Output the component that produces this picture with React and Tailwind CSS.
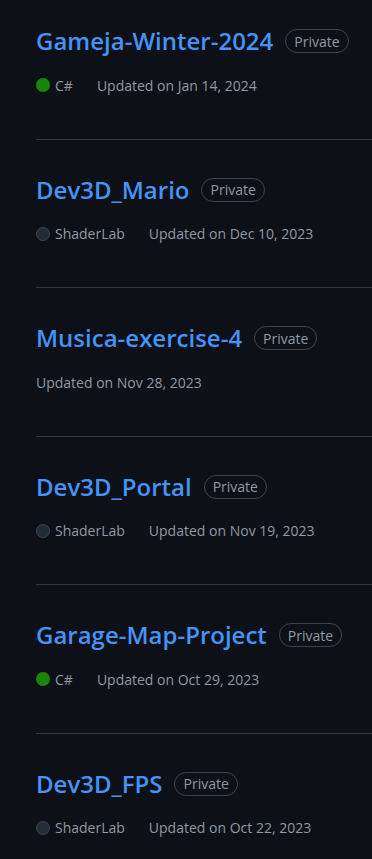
import React from "react";

const repos = [
  { name: "Gameja-Winter-2024", lang: "C#", color: "bg-[#178600]", updated: "Jan 14, 2024" },
  { name: "Dev3D_Mario", lang: "ShaderLab", color: "bg-[#222c37]", updated: "Dec 10, 2023" },
  { name: "Musica-exercise-4", lang: null, updated: "Nov 28, 2023" },
  { name: "Dev3D_Portal", lang: "ShaderLab", color: "bg-[#222c37]", updated: "Nov 19, 2023" },
  { name: "Garage-Map-Project", lang: "C#", color: "bg-[#178600]", updated: "Oct 29, 2023" },
  { name: "Dev3D_FPS", lang: "ShaderLab", color: "bg-[#222c37]", updated: "Oct 22, 2023" },
];

const RepoItem = ({ repo, first }) => {
  return (
    <li className={`border-b border-[#30363d] pb-[43.5px] ${first ? "pt-[25px]" : "pt-[34px]"}`}>
      <div className="flex items-center gap-3">
        <a className="text-[24px] leading-[32px] font-semibold text-[#4493f8]">
          {repo.name}
        </a>
        <span className="rounded-full border border-[#3d444d] px-[8px] h-[24px] flex items-center text-[14px] text-[#9198a1]">
          Private
        </span>
      </div>
      <div className="mt-[18px] flex items-center h-5 text-[14px] text-[#9198a1]">
        {repo.lang && (
          <span className="flex items-center mr-6">
            <span
              className={`inline-block w-[14px] h-[14px] rounded-full mr-[5px] ${repo.color} ${
                repo.lang === "ShaderLab" ? "border border-[#3d444d]" : ""
              }`}
            />
            {repo.lang}
          </span>
        )}
        <span>Updated on {repo.updated}</span>
      </div>
    </li>
  );
};

const App = () => {
  return (
    <div
      className="min-h-screen bg-[#0d1117] overflow-hidden"
      style={{ fontFamily: '"Open Sans", "Noto Sans", sans-serif' }}
    >
      <ul className="ml-9">
        {repos.map((r, i) => (
          <RepoItem key={r.name} repo={r} first={i === 0} />
        ))}
      </ul>
    </div>
  );
};

export default App;
